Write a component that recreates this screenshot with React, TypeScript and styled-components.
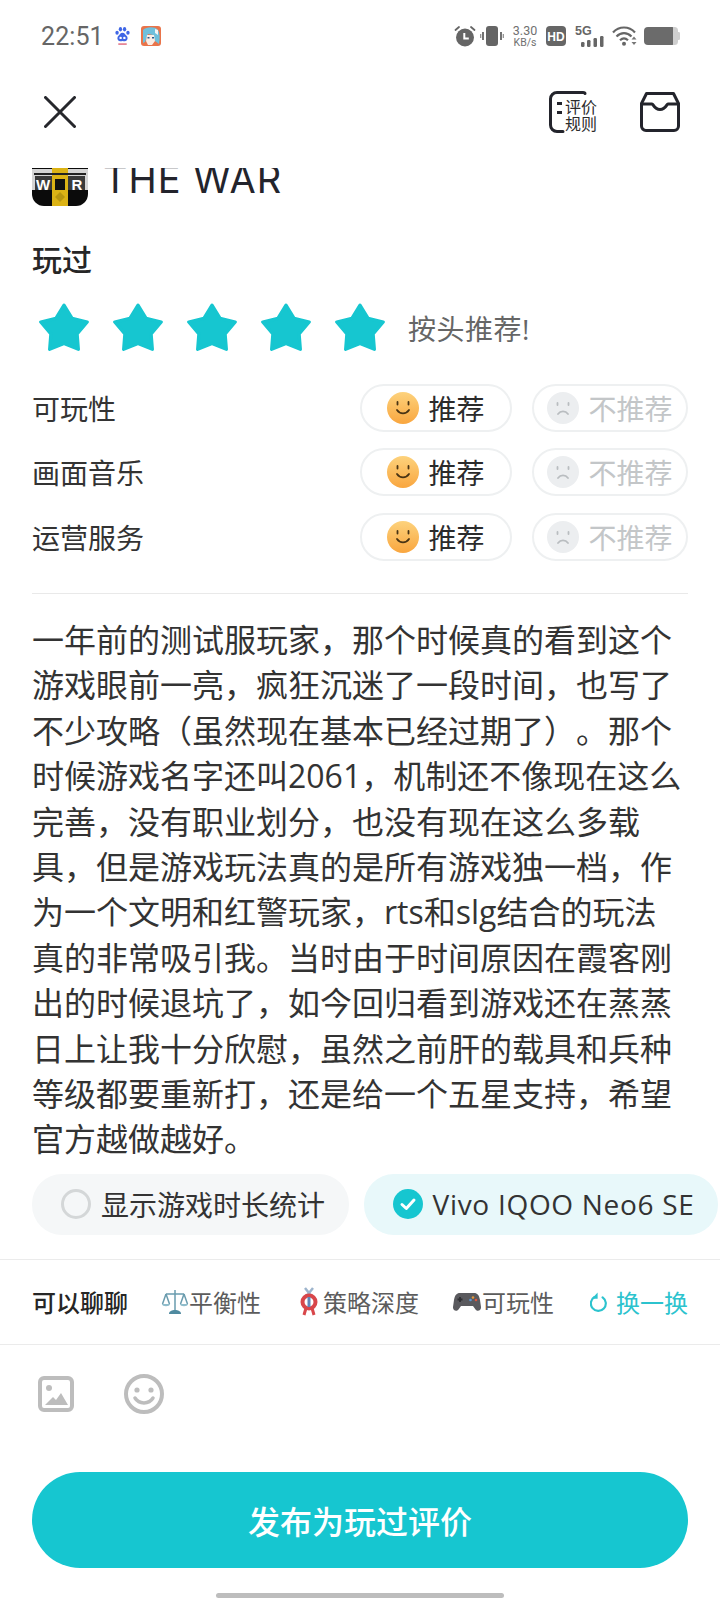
import React from "react";
import styled, { createGlobalStyle } from "styled-components";

const GlobalStyle = createGlobalStyle`
  html, body {
    margin: 0;
    padding: 0;
    background: #fff;
  }
  * {
    box-sizing: border-box;
  }
`;

const CN = `"Open Sans", "Noto Sans CJK SC", sans-serif`;
const TEAL = "#16c6d0";

const Page = styled.div`
  width: 720px;
  height: 1600px;
  overflow: hidden;
  background: #fff;
  display: flex;
  flex-direction: column;
  font-family: ${CN};
  color: #2b2b2b;
  text-spacing-trim: space-all;
`;

const StatusBar = styled.div`
  height: 72px;
  padding: 0 40px 0 41px;
  display: flex;
  align-items: center;
  justify-content: space-between;
`;

const StatusGroup = styled.div<{ $gap: number }>`
  display: flex;
  align-items: center;
  gap: ${(p) => p.$gap}px;
`;

const Clock = styled.div`
  font-family: Roboto, sans-serif;
  font-size: 25px;
  letter-spacing: 0.1px;
  color: #666;
`;

const AlarmSlot = styled.div`
  display: flex;
  margin-right: -3px;
`;

const Speed = styled.div`
  width: 28px;
  display: flex;
  flex-direction: column;
  align-items: center;
  font-family: Roboto, sans-serif;
  color: #707070;
  div:first-child {
    font-size: 12.5px;
    line-height: 12px;
  }
  div:last-child {
    font-size: 10.5px;
    line-height: 11px;
  }
`;

const NavBar = styled.div`
  height: 80px;
  margin-bottom: 16px;
  padding: 0 40px 0 44px;
  display: flex;
  align-items: center;
  justify-content: space-between;
`;

const NavActions = styled.div`
  display: flex;
  align-items: center;
  gap: 43px;
`;

const GameClip = styled.div`
  height: 42px;
  padding: 0 32px;
  overflow: hidden;
`;

const GameRow = styled.div`
  margin-top: -19px;
  display: flex;
  align-items: center;
  gap: 15px;
`;

const GameName = styled.div`
  margin-top: 2px;
  font-family: Inter, sans-serif;
  font-size: 38px;
  letter-spacing: 1px;
  line-height: 56px;
  color: #23242c;
`;

const Heading = styled.div`
  margin: 30px 32px 0;
  font-size: 30px;
  line-height: 40px;
  font-weight: 500;
  color: #262626;
`;

const StarRow = styled.div`
  margin: 23px 32px 0 39px;
  height: 50px;
  display: flex;
  align-items: center;
  gap: 24px;
`;

const StarHint = styled.div`
  font-size: 28px;
  letter-spacing: 0.5px;
  color: #666;
  margin-left: -1px;
`;

const Ratings = styled.div`
  margin: 31px 32px 0 32px;
  display: flex;
  flex-direction: column;
  gap: 16.3px;
`;

const RatingRow = styled.div`
  height: 48px;
  display: flex;
  align-items: center;
`;

const RatingLabel = styled.div`
  flex: 1;
  font-size: 28px;
  color: #333;
`;

const Pill = styled.div<{ $width: number; $muted?: boolean }>`
  width: ${(p) => p.$width}px;
  height: 48px;
  margin-left: ${(p) => (p.$muted ? 20 : 0)}px;
  border: 2px solid #eef0f1;
  border-radius: 24px;
  display: flex;
  align-items: center;
  justify-content: center;
  gap: 9px;
  font-size: 28px;
  color: ${(p) => (p.$muted ? "#c3c6c8" : "#2b2b2b")};
`;

const Divider = styled.div`
  height: 1px;
  margin: 32px 32px 0;
  background: #e9e9e9;
`;

const Review = styled.div`
  margin: 23.4px 20px 0 32px;
  font-size: 32px;
  line-height: 45.4px;
  color: #333;
`;

const ReviewLine = styled.div`
  white-space: nowrap;
`;

const Chips = styled.div`
  margin: 12px 0 0 32px;
  display: flex;
  gap: 15px;
`;

const Chip = styled.div<{ $active?: boolean }>`
  height: 61px;
  padding: 0 23.5px 0 29px;
  border-radius: 30px;
  background: ${(p) => (p.$active ? "#e8f8fa" : "#f5f7f8")};
  display: flex;
  align-items: center;
  gap: 10px;
  font-size: 28px;
  letter-spacing: ${(p) => (p.$active ? 0.7 : 0)}px;
  color: #333;
  white-space: nowrap;
`;

const Radio = styled.div`
  width: 30px;
  height: 30px;
  border-radius: 50%;
  border: 3px solid #d4d7d8;
`;

const TopicBar = styled.div`
  margin-top: 24px;
  height: 86px;
  border-top: 1px solid #ebebeb;
  border-bottom: 1px solid #ebebeb;
  padding: 0 32px;
  display: flex;
  align-items: center;
`;

const TopicTitle = styled.div`
  font-size: 24px;
  font-weight: 500;
  color: #262626;
  width: 96px;
`;

const Topic = styled.div<{ $left: number; $iconGap?: number }>`
  margin-left: ${(p) => p.$left}px;
  display: flex;
  align-items: center;
  gap: ${(p) => p.$iconGap ?? 0}px;
  font-size: 24px;
  color: #5c5c5c;
  white-space: nowrap;
`;

const Refresh = styled.div`
  margin-left: auto;
  display: flex;
  align-items: center;
  gap: 8px;
  font-size: 24px;
  color: #2cc3ce;
`;

const Toolbar = styled.div`
  padding: 31px 0 0 38px;
  display: flex;
  align-items: flex-start;
  gap: 50px;
  height: 127px;
`;

const PublishButton = styled.div`
  margin: 0 32px;
  height: 96px;
  border-radius: 48px;
  background: ${TEAL};
  color: #fff;
  font-size: 32px;
  font-weight: 500;
  display: flex;
  align-items: center;
  justify-content: center;
`;

const HomeBarRow = styled.div`
  margin-top: 25px;
  display: flex;
  justify-content: center;
`;

const HomeBar = styled.div`
  width: 288px;
  height: 5px;
  border-radius: 3px;
  background: #bdbdbd;
`;

const PawIcon = () => (
  <svg width="15" height="20" viewBox="0 0 16 20">
    <g fill="#3f66e6">
      <ellipse cx="2.2" cy="6.5" rx="1.8" ry="2.2" />
      <ellipse cx="5.8" cy="2.8" rx="1.8" ry="2.3" />
      <ellipse cx="10.2" cy="2.8" rx="1.8" ry="2.3" />
      <ellipse cx="13.8" cy="6.5" rx="1.8" ry="2.2" />
      <path d="M8 6.5c2.5 0 3 2.2 4.5 3.6 1.6 1.5 1.2 5.4-2 5.4-1 0-1.7-.3-2.5-.3s-1.500.3-2.500.3c-3.200 0-3.600-3.900-2-5.400C5 8.700 5.500 6.500 8 6.500z" />
    </g>
    <rect x="3.500" y="18" width="9" height="1.200" fill="#d8405a" />
    <circle cx="6" cy="12" r="1.300" fill="#fff" />
    <circle cx="10" cy="12" r="1.300" fill="#fff" />
  </svg>
);

const AppIcon = () => (
  <svg width="20" height="20" viewBox="0 0 20 20">
    <rect width="20" height="20" rx="3" fill="#e9744a" />
    <path d="M2 4c3-3 12-4 15 0 2 3 2 9 1 14l-4-3-2-6-5-1-3 8-2 1z" fill="#6fc0dc" />
    <path d="M6 9h7l1 6-3 4H7l-2-4z" fill="#fbeee6" />
    <path d="M6.500 11h2v1.500h-2zM11 11h2v1.500h-2z" fill="#2b5c8f" />
    <path d="M14 3l3 1v5l-3-2z" fill="#f5f5f5" />
  </svg>
);

const AlarmIcon = () => (
  <svg width="22" height="22" viewBox="0 0 22 22">
    <circle cx="11" cy="12.500" r="9" fill="#656565" />
    <path d="M10.300 8v5.500h4.500" fill="none" stroke="#fff" strokeWidth="2" />
    <path d="M1.500 5l3.500-3M20.500 5L17 2" stroke="#656565" strokeWidth="1.800" strokeLinecap="round" />
  </svg>
);

const VibrateIcon = () => (
  <svg width="24" height="20" viewBox="0 0 24 20">
    <rect x="6" y="0" width="12" height="20" rx="3" fill="#656565" />
    <path d="M3 6v8M21 6v8" stroke="#656565" strokeWidth="1.800" />
    <path d="M.7 8v4M23.300 8v4" stroke="#8a8a8a" strokeWidth="1.200" />
  </svg>
);

const HdIcon = () => (
  <svg width="20" height="20" viewBox="0 0 20 20">
    <rect width="20" height="20" rx="4" fill="#666" />
    <text x="10" y="14.500" textAnchor="middle" fontFamily="Liberation Sans" fontWeight="700" fontSize="12" fill="#fff">
      HD
    </text>
  </svg>
);

const SignalIcon = () => (
  <svg width="32" height="22" viewBox="-2 0 32 22">
    <text x="0" y="10" fontFamily="Liberation Sans" fontWeight="700" fontSize="12.500" fill="#666">
      5G
    </text>
    <rect x="6" y="17" width="3.500" height="5" rx="1.200" fill="#666" />
    <rect x="12" y="15" width="3.500" height="7" rx="1.200" fill="#666" />
    <rect x="18.500" y="13" width="3.500" height="9" rx="1.200" fill="#666" />
    <rect x="25" y="11" width="3.500" height="11" rx="1.200" fill="#666" />
  </svg>
);

const WifiIcon = () => (
  <svg width="25" height="20" viewBox="0 0 25 20">
    <g fill="none" stroke="#666" strokeWidth="2.200">
      <path d="M1 6.500C7-.2 17-.2 23 6.500" />
      <path d="M4.500 10.500c4.500-4.500 10.500-4.500 15 0" />
      <path d="M8 14.300c2.700-2.500 5.300-2.500 8 0" />
    </g>
    <circle cx="12" cy="17.800" r="2" fill="#666" />
    <path d="M22 10.500l2.500 3h-5zM22 19l2.500-3h-5z" fill="#777" />
  </svg>
);

const BatteryIcon = () => (
  <svg width="36" height="18" viewBox="0 0 36 18">
    <rect width="32" height="18" rx="4" fill="#6b6b6b" />
    <path d="M29 0h1.500A3.500 3.500 0 0 1 34 3.500v11a3.500 3.500 0 0 1-3.500 3.500H29z" fill="#cfcfcf" />
    <path d="M34 5h.8a1.200 1.200 0 0 1 1.200 1.200v5.600a1.200 1.200 0 0 1-1.200 1.200H34z" fill="#cfcfcf" />
  </svg>
);

const CloseIcon = () => (
  <svg width="32" height="32" viewBox="0 0 32 32">
    <path d="M1.500 1.500l29 29M30.500 1.500l-29 29" stroke="#26272c" strokeWidth="3" strokeLinecap="round" />
  </svg>
);

const RulesIcon = () => (
  <svg width="48" height="42" viewBox="0 0 48 42" overflow="visible">
    <path d="M36 2.500C36 1.800 35 1.500 34 1.500H8a6.500 6.500 0 0 0-6.500 6.500v26A6.500 6.500 0 0 0 8 40.500h6" fill="none" stroke="#23242c" strokeWidth="3" strokeLinecap="round" />
    <path d="M8 12.500h5M8 21.500h5" stroke="#23242c" strokeWidth="3" />
    <text x="16" y="22" fontFamily="Noto Sans CJK SC" fontSize="16" fill="#2b2b2b">评价</text>
    <text x="16" y="39" fontFamily="Noto Sans CJK SC" fontSize="16" fill="#2b2b2b">规则</text>
  </svg>
);

const BagIcon = () => (
  <svg width="40" height="40" viewBox="0 0 40 40">
    <path d="M6.500 1.500h27l5 10V34a4.500 4.500 0 0 1-4.500 4.500H6A4.500 4.500 0 0 1 1.500 34V11.500z" fill="none" stroke="#23242c" strokeWidth="3" strokeLinejoin="round" />
    <path d="M1.500 12H12c1.500 0 2 5.500 8 5.500s6.500-5.500 8-5.500h10.500" fill="none" stroke="#23242c" strokeWidth="3" />
  </svg>
);

const GameLogo = () => (
  <svg width="56" height="56" viewBox="0 0 56 56">
    <path d="M0 0h56v44a12 12 0 0 1-12 12H12A12 12 0 0 1 0 44z" fill="#0b0b0b" />
    <rect x="0" y="19" width="56" height="21" fill="#d4d4d4" />
    <rect x="3" y="26" width="50" height="14" fill="#3a3a3a" />
    <rect x="20" y="0" width="16" height="56" fill="#dcb315" />
    <rect x="23" y="29" width="10" height="11" fill="#111" />
    <path d="M2 24h52" stroke="#222" strokeWidth="2" />
    <text x="11" y="39.500" textAnchor="middle" fontFamily="Liberation Sans" fontWeight="700" fontSize="15" fill="#fff">W</text>
    <text x="45" y="39.500" textAnchor="middle" fontFamily="Liberation Sans" fontWeight="700" fontSize="15" fill="#fff">R</text>
    <path d="M28 42l5 5-5 5-5-5z" fill="#b8960f" />
  </svg>
);

const StarIcon = () => (
  <svg width="50" height="50" viewBox="1.500 3 47 47">
    <path
      d="M25 5L32.640 17.480 46.870 20.890 37.360 32.020 38.520 46.610 25 41 11.480 46.610 12.640 32.020 3.130 20.890 17.360 17.480z"
      fill={TEAL}
      stroke={TEAL}
      strokeWidth="3"
      strokeLinejoin="round"
    />
  </svg>
);

const HappyFace = () => (
  <svg width="32" height="32" viewBox="0 0 32 32">
    <defs>
      <linearGradient id="faceFill" x1="0" y1="0" x2="0" y2="1">
        <stop offset="0" stopColor="#fdd27c" />
        <stop offset="1" stopColor="#f9a63f" />
      </linearGradient>
    </defs>
    <circle cx="16" cy="16" r="16" fill="url(#faceFill)" />
    <path d="M10.500 10v2.500M21.500 10v2.500" stroke="#4a3414" strokeWidth="1.800" strokeLinecap="round" />
    <path d="M10 18c3 4.500 9 4.500 12 0" fill="none" stroke="#4a3414" strokeWidth="1.800" strokeLinecap="round" />
  </svg>
);

const SadFace = () => (
  <svg width="32" height="32" viewBox="0 0 32 32">
    <circle cx="16" cy="16" r="16" fill="#eceef0" />
    <path d="M10.500 11v2M21.500 11v2" stroke="#b9bdc0" strokeWidth="1.800" strokeLinecap="round" />
    <path d="M11 22c2.500-3.500 7.500-3.500 10 0" fill="none" stroke="#b9bdc0" strokeWidth="1.800" strokeLinecap="round" />
  </svg>
);

const CheckCircle = () => (
  <svg width="30" height="30" viewBox="0 0 30 30">
    <circle cx="15" cy="15" r="15" fill={TEAL} />
    <path d="M9 15.500l4.300 4L21 11" fill="none" stroke="#fff" strokeWidth="3" strokeLinecap="round" strokeLinejoin="round" />
  </svg>
);

const ScaleIcon = () => (
  <svg width="28" height="28" viewBox="0 0 28 28">
    <g fill="none" stroke="#6a9cae" strokeWidth="1.500">
      <path d="M14 2v21M5 6h18" />
      <path d="M5 6L1.500 16M5 6l3.500 10M23 6l-3.500 10M23 6l3.500 10" />
    </g>
    <path d="M1 16h8c0 3-8 3-8 0zM19 16h8c0 3-8 3-8 0z" fill="#8fbccb" />
    <path d="M8 26c0-3 3-4 6-4s6 1 6 4z" fill="#4f8aa0" />
  </svg>
);

const KnotIcon = () => (
  <svg width="18" height="30" viewBox="0 0 18 30">
    <path d="M5 1l8 10M13 1L5 11" stroke="#9db4cc" strokeWidth="2.500" />
    <circle cx="9" cy="15" r="6.500" fill="none" stroke="#d8464a" strokeWidth="4" />
    <path d="M6 21l-2 7M12 21l2 7" stroke="#d8464a" strokeWidth="3" />
    <path d="M9 10v10" stroke="#5f86b8" strokeWidth="3" />
  </svg>
);

const PadIcon = () => (
  <svg width="28" height="24" viewBox="0 0 28 24">
    <path d="M7 3h14c3.500 0 5 2 6 7l1 7c.3 3.500-3.500 5-5.500 2.500L20 16H8l-2.500 3.500C3.500 22 -.3 20.500 0 17l1-7c1-5 2.500-7 6-7z" fill="#5a5a5e" />
    <path d="M7 7v5M4.500 9.500h5" stroke="#2f2f33" strokeWidth="1.800" />
    <circle cx="20" cy="7.500" r="1.300" fill="#e69a3a" />
    <circle cx="23" cy="10" r="1.300" fill="#e0563e" />
    <circle cx="17.500" cy="10" r="1.300" fill="#5a9ad8" />
  </svg>
);

const RefreshIcon = () => (
  <svg width="18" height="22" viewBox="0 0 20 24">
    <path d="M5 6.500a8.300 8.300 0 1 0 9 .3" fill="none" stroke="#2cc3ce" strokeWidth="2.400" strokeLinecap="round" />
    <path d="M8.500 1.500v7H2z" fill="#2cc3ce" />
  </svg>
);

const ImageIcon = () => (
  <svg width="36" height="36" viewBox="0 0 36 36">
    <rect x="2" y="2" width="32" height="32" rx="4" fill="none" stroke="#bdbdbd" strokeWidth="4" />
    <circle cx="11" cy="12" r="3" fill="#bdbdbd" />
    <path d="M7 29l8-8 3 3 5-7 7 12z" fill="#bdbdbd" />
  </svg>
);

const SmileIcon = () => (
  <svg width="40" height="40" viewBox="0 0 40 40" style={{ marginTop: -2 }}>
    <circle cx="20" cy="20" r="18" fill="none" stroke="#bdbdbd" strokeWidth="4" />
    <circle cx="13" cy="16" r="2.600" fill="#bdbdbd" />
    <circle cx="27" cy="16" r="2.600" fill="#bdbdbd" />
    <path d="M11 24c4 6.500 14 6.500 18 0" fill="none" stroke="#bdbdbd" strokeWidth="3.500" strokeLinecap="round" />
  </svg>
);

const ratingLabels = ["可玩性", "画面音乐", "运营服务"];

const reviewLines = [
  "一年前的测试服玩家，那个时候真的看到这个",
  "游戏眼前一亮，疯狂沉迷了一段时间，也写了",
  "不少攻略（虽然现在基本已经过期了）。那个",
  "时候游戏名字还叫2061，机制还不像现在这么",
  "完善，没有职业划分，也没有现在这么多载",
  "具，但是游戏玩法真的是所有游戏独一档，作",
  "为一个文明和红警玩家，rts和slg结合的玩法",
  "真的非常吸引我。当时由于时间原因在霞客刚",
  "出的时候退坑了，如今回归看到游戏还在蒸蒸",
  "日上让我十分欣慰，虽然之前肝的载具和兵种",
  "等级都要重新打，还是给一个五星支持，希望",
  "官方越做越好。",
];

const App: React.FC = () => {
  return (
    <Page>
      <GlobalStyle />
      <StatusBar>
        <StatusGroup $gap={11}>
          <Clock>22:51</Clock>
          <PawIcon />
          <AppIcon />
        </StatusGroup>
        <StatusGroup $gap={7}>
          <AlarmSlot>
            <AlarmIcon />
          </AlarmSlot>
          <VibrateIcon />
          <Speed>
            <div>3.30</div>
            <div>KB/s</div>
          </Speed>
          <HdIcon />
          <SignalIcon />
          <WifiIcon />
          <BatteryIcon />
        </StatusGroup>
      </StatusBar>

      <NavBar>
        <CloseIcon />
        <NavActions>
          <RulesIcon />
          <BagIcon />
        </NavActions>
      </NavBar>

      <GameClip>
        <GameRow>
          <GameLogo />
          <GameName>THE WAR</GameName>
        </GameRow>
      </GameClip>

      <Heading>玩过</Heading>

      <StarRow>
        {[0, 1, 2, 3, 4].map((i) => (
          <StarIcon key={i} />
        ))}
        <StarHint>按头推荐!</StarHint>
      </StarRow>

      <Ratings>
        {ratingLabels.map((label) => (
          <RatingRow key={label}>
            <RatingLabel>{label}</RatingLabel>
            <Pill $width={152}>
              <HappyFace />
              推荐
            </Pill>
            <Pill $width={156} $muted>
              <SadFace />
              不推荐
            </Pill>
          </RatingRow>
        ))}
      </Ratings>

      <Divider />

      <Review>
        {reviewLines.map((line) => (
          <ReviewLine key={line}>{line}</ReviewLine>
        ))}
      </Review>

      <Chips>
        <Chip>
          <Radio />
          显示游戏时长统计
        </Chip>
        <Chip $active>
          <CheckCircle />
          Vivo IQOO Neo6 SE
        </Chip>
      </Chips>

      <TopicBar>
        <TopicTitle>可以聊聊</TopicTitle>
        <Topic $left={33}>
          <ScaleIcon />
          平衡性
        </Topic>
        <Topic $left={39} $iconGap={5}>
          <KnotIcon />
          策略深度
        </Topic>
        <Topic $left={34} $iconGap={1}>
          <PadIcon />
          可玩性
        </Topic>
        <Refresh>
          <RefreshIcon />
          换一换
        </Refresh>
      </TopicBar>

      <Toolbar>
        <ImageIcon />
        <SmileIcon />
      </Toolbar>

      <PublishButton>发布为玩过评价</PublishButton>

      <HomeBarRow>
        <HomeBar />
      </HomeBarRow>
    </Page>
  );
};

export default App;
